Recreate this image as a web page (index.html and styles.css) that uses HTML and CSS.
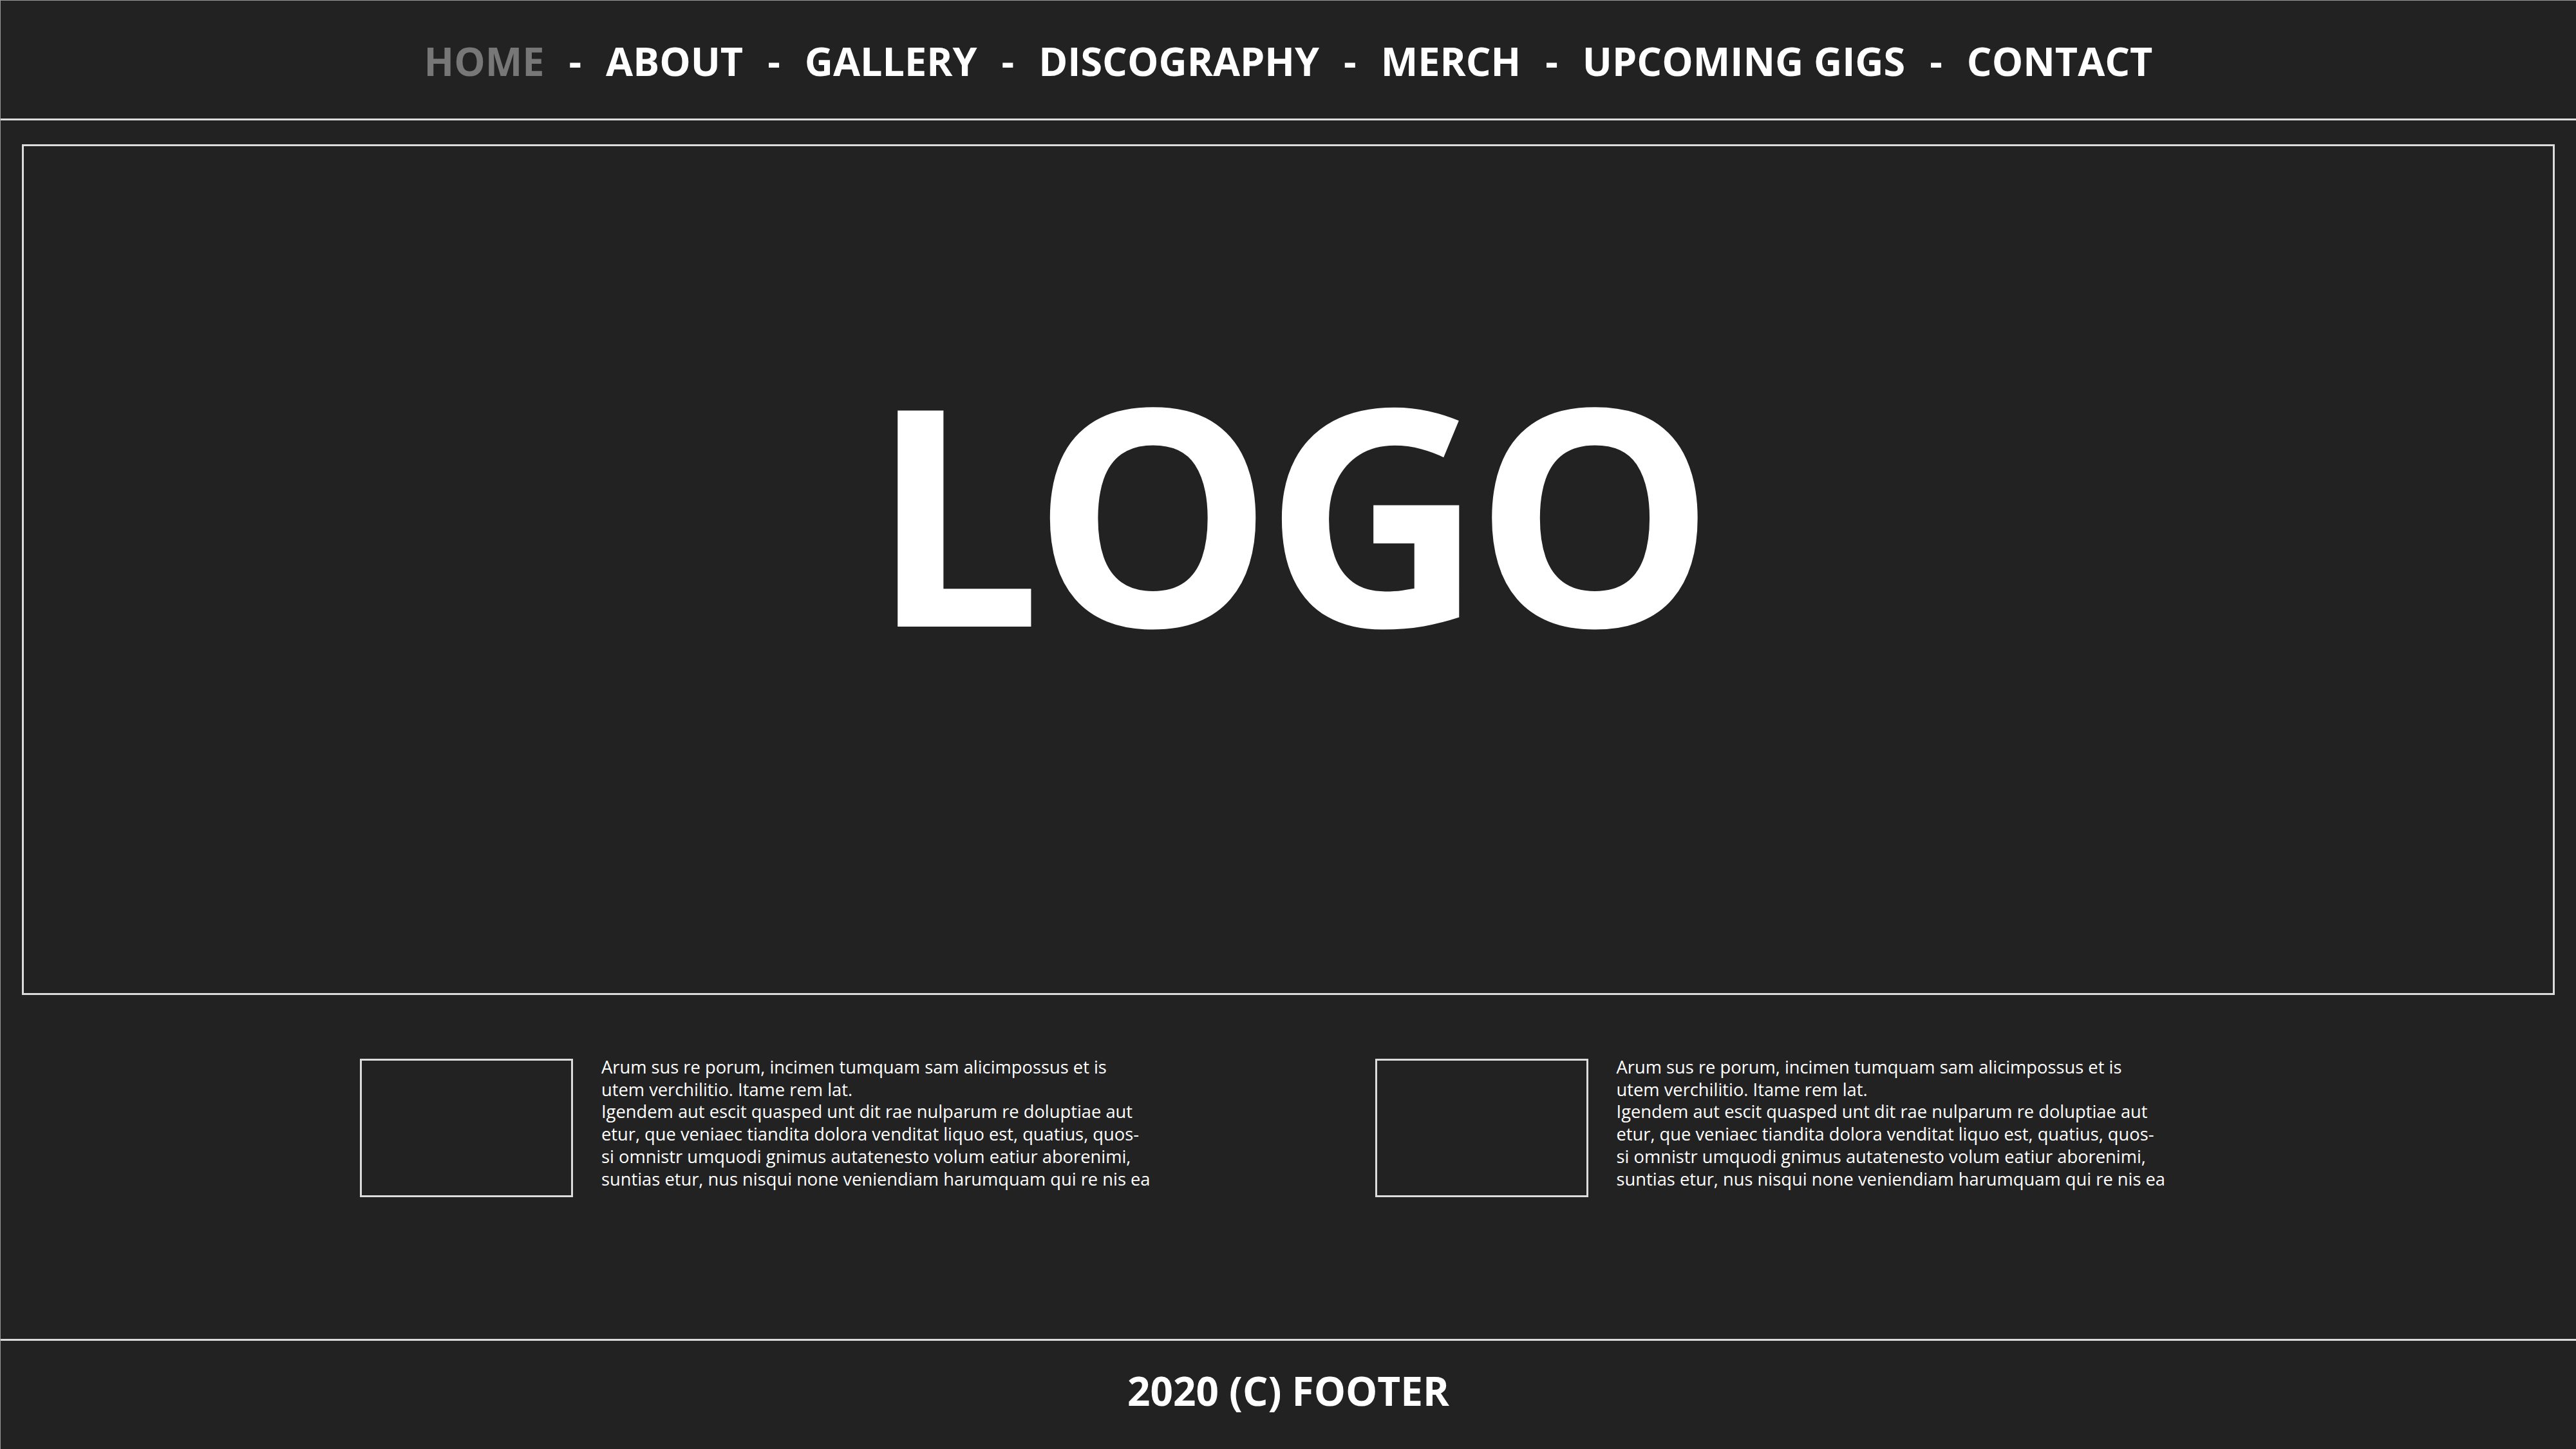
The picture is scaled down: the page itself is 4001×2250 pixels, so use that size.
FILE: index.html
```html
<!DOCTYPE html>
<html lang="en">
<head>
<meta charset="utf-8">
<title>Band site</title>
<link rel="stylesheet" href="styles.css">
</head>
<body>
<div class="page">
  <header class="nav">
    <a class="nav-link active">HOME</a><span class="sep">-</span>
    <a class="nav-link">ABOUT</a><span class="sep">-</span>
    <a class="nav-link">GALLERY</a><span class="sep">-</span>
    <a class="nav-link">DISCOGRAPHY</a><span class="sep">-</span>
    <a class="nav-link">MERCH</a><span class="sep">-</span>
    <a class="nav-link">UPCOMING GIGS</a><span class="sep">-</span>
    <a class="nav-link">CONTACT</a>
  </header>
  <section class="hero">
    <h1 class="logo">LOGO</h1>
  </section>
  <section class="cards">
    <div class="card">
      <div class="thumb"></div>
      <p class="card-text">Arum sus re porum, incimen tumquam sam alicimpossus et is<br>utem verchilitio. Itame rem lat.<br>Igendem aut escit quasped unt dit rae nulparum re doluptiae aut<br>etur, que veniaec tiandita dolora venditat liquo est, quatius, quos-<br>si omnistr umquodi gnimus autatenesto volum eatiur aborenimi,<br>suntias etur, nus nisqui none veniendiam harumquam qui re nis ea</p>
    </div>
    <div class="card">
      <div class="thumb"></div>
      <p class="card-text">Arum sus re porum, incimen tumquam sam alicimpossus et is<br>utem verchilitio. Itame rem lat.<br>Igendem aut escit quasped unt dit rae nulparum re doluptiae aut<br>etur, que veniaec tiandita dolora venditat liquo est, quatius, quos-<br>si omnistr umquodi gnimus autatenesto volum eatiur aborenimi,<br>suntias etur, nus nisqui none veniendiam harumquam qui re nis ea</p>
    </div>
  </section>
  <footer class="footer">2020 (C) FOOTER</footer>
</div>
</body>
</html>
```
FILE: styles.css
```css
html, body {
  margin: 0;
  padding: 0;
  background: #222222;
}
.page {
  width: 4001px;
  height: 2250px;
  box-sizing: border-box;
  border-top: 1px solid #9a9a9a;
  border-left: 1px solid #9a9a9a;
  display: flex;
  flex-direction: column;
  font-family: "Open Sans", "Noto Sans", "Liberation Sans", sans-serif;
  color: #ffffff;
}
.nav {
  height: 186px;
  box-sizing: border-box;
  padding-top: 3px;
  border-bottom: 3px solid #dcdcdc;
  display: flex;
  align-items: center;
  justify-content: center;
  gap: 38px;
  font-size: 61px;
  font-weight: 700;
  flex-shrink: 0;
}
.nav-link {
  color: #ffffff;
  text-decoration: none;
  white-space: nowrap;
}
.nav-link.active {
  color: #777777;
}
.sep {
  color: #ffffff;
}
.hero {
  margin: 37px 33px 0 33px;
  height: 1321px;
  box-sizing: border-box;
  border: 3px solid #dcdcdc;
  display: flex;
  align-items: center;
  justify-content: center;
  padding-bottom: 188px;
  flex-shrink: 0;
}
.logo {
  margin: 0;
  font-size: 470px;
  font-weight: 700;
  line-height: 1;
  letter-spacing: -14px;
}
.cards {
  flex: 1;
  display: flex;
  padding: 99px 0 0 558px;
  gap: 349px;
}
.card {
  display: flex;
  align-items: flex-start;
  gap: 44px;
}
.thumb {
  width: 331px;
  height: 215px;
  box-sizing: border-box;
  border: 3px solid #dcdcdc;
  flex-shrink: 0;
}
.card-text {
  margin: 0;
  margin-top: -4px;
  font-size: 27.3px;
  line-height: 34.7px;
  white-space: nowrap;
}
.footer {
  height: 171px;
  box-sizing: border-box;
  padding-bottom: 14px;
  border-top: 3px solid #dcdcdc;
  display: flex;
  align-items: center;
  justify-content: center;
  font-size: 62px;
  font-weight: 700;
  flex-shrink: 0;
}
```
